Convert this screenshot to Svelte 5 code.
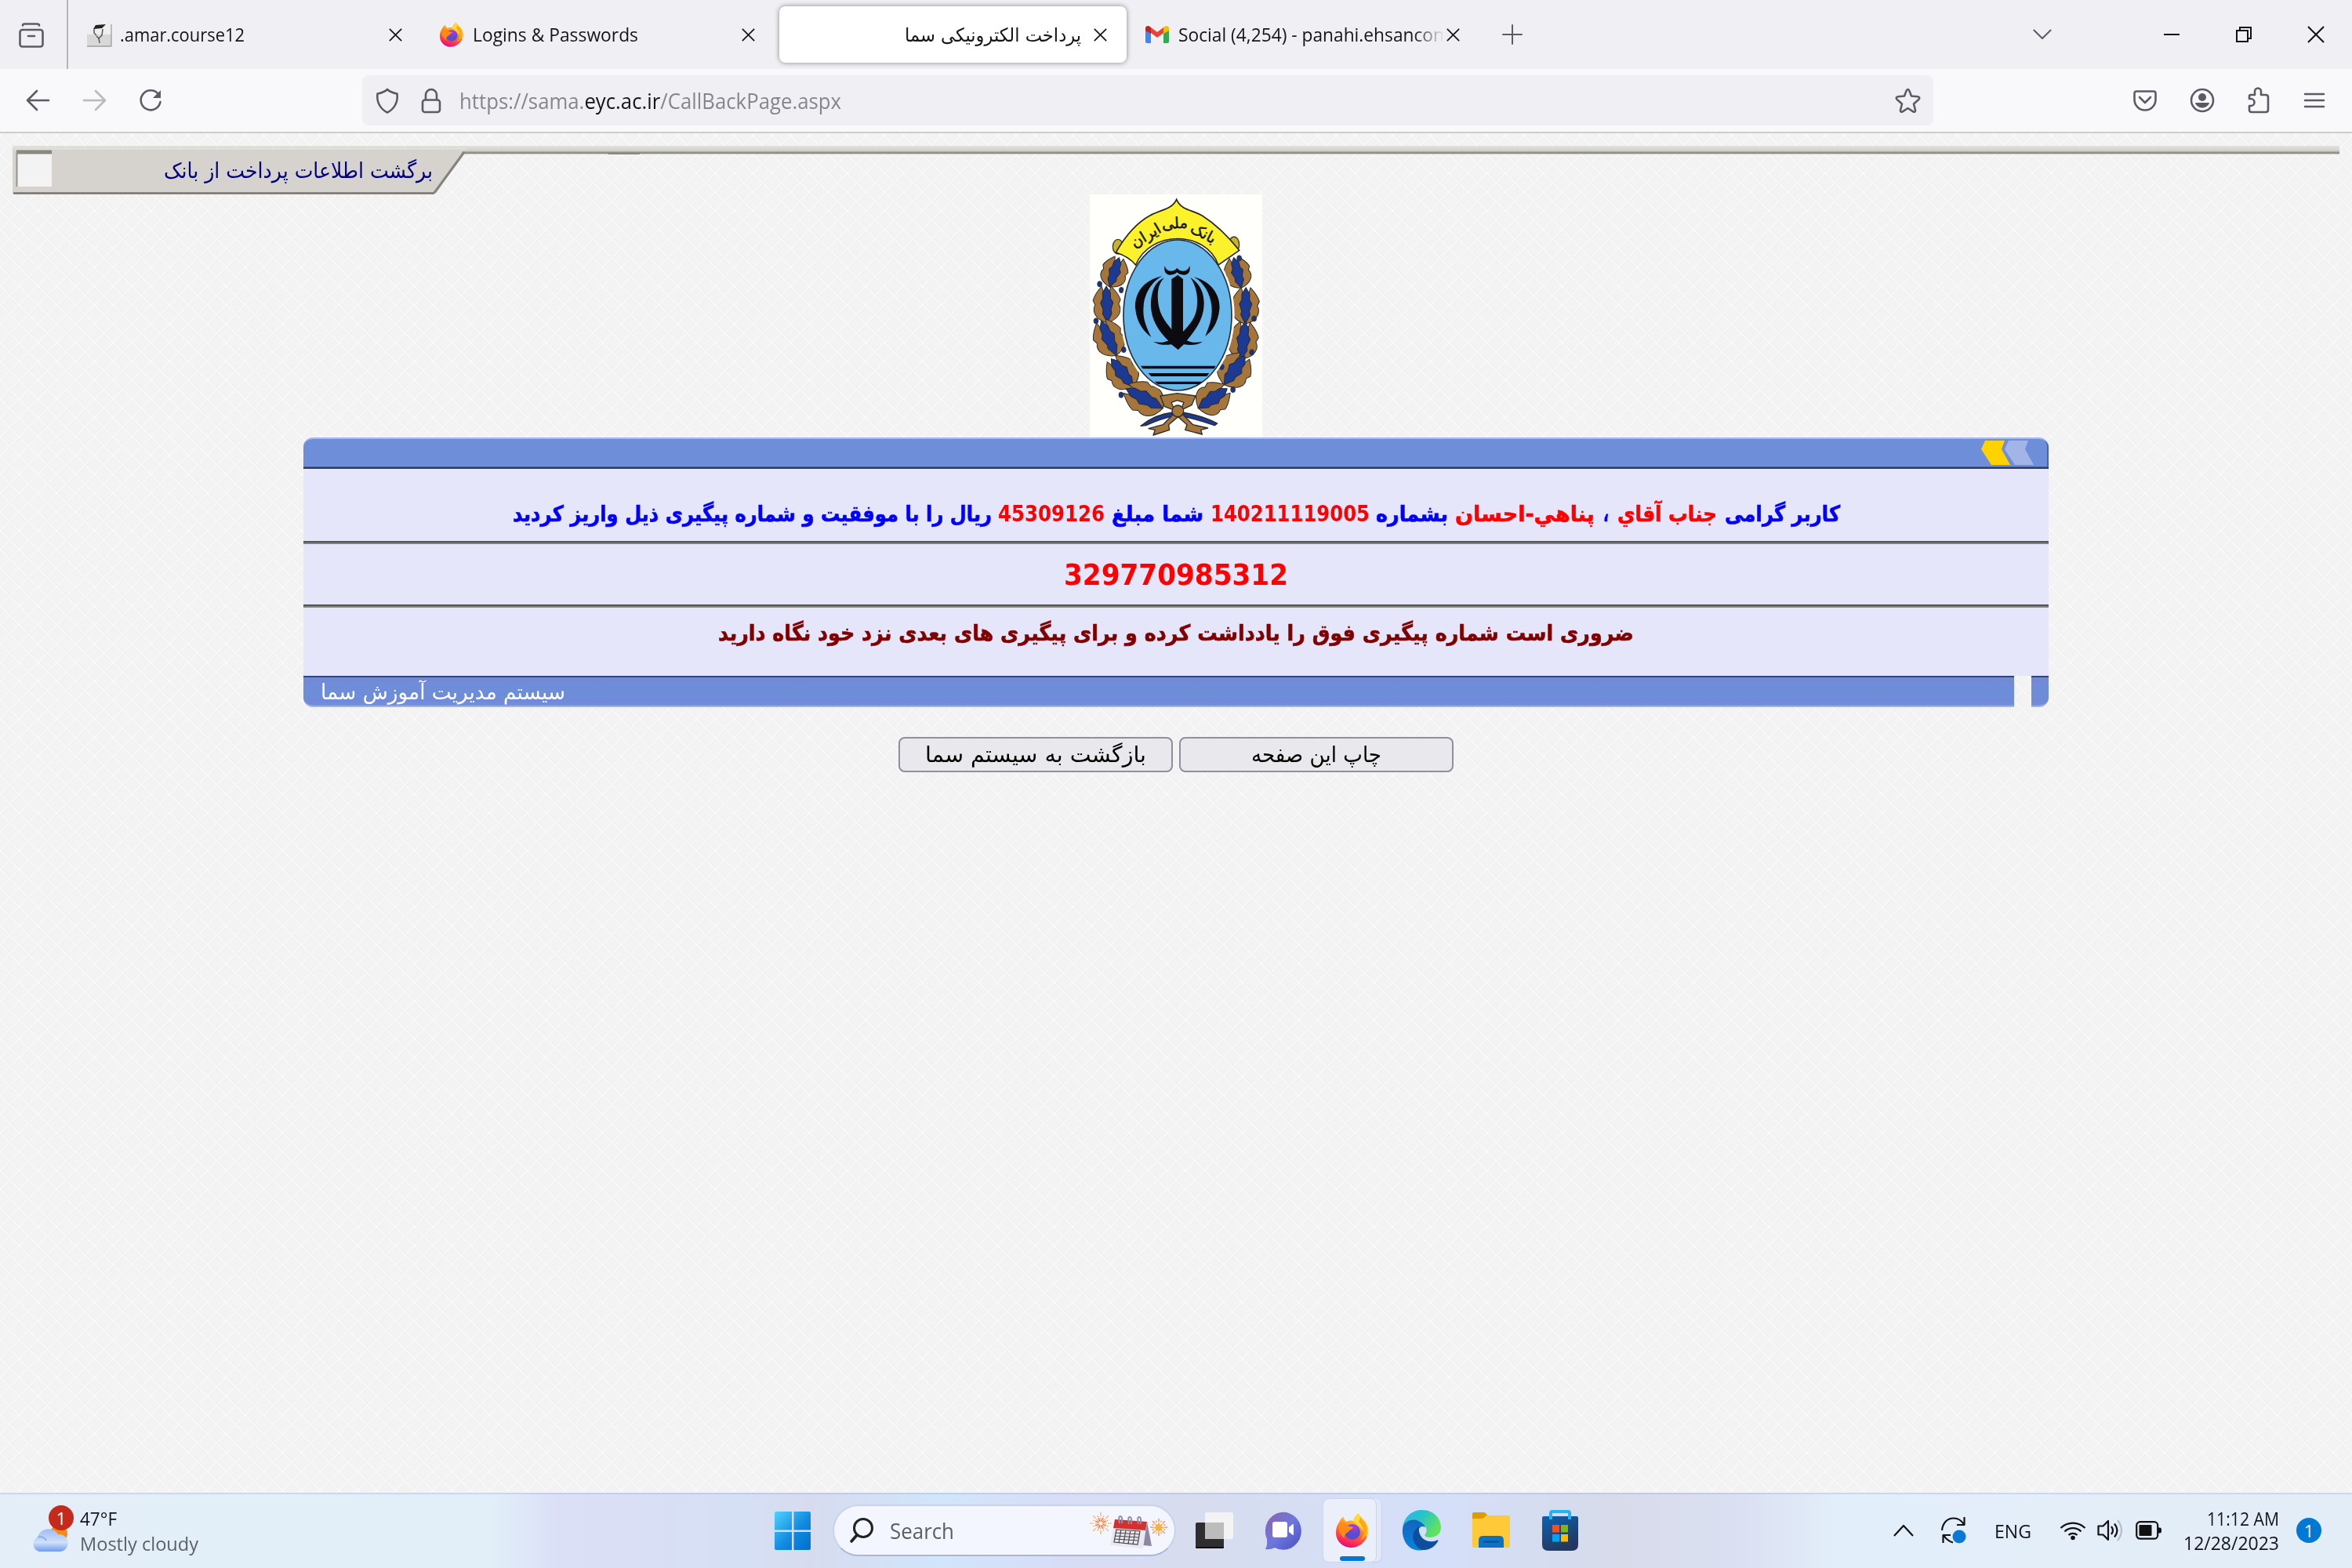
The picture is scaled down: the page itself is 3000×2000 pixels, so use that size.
<script>
  // Scales a single line of text horizontally to the width its slot reserves.
  function fit(node, width) {
    const natural = node.getBoundingClientRect().width;
    if (natural > 0) node.style.transform = `scaleX(${width / natural})`;
  }

  const message = [
    { text: 'کاربر گرامی', w: 147, gap: 0 },
    { text: 'جناب آقاي', w: 127, gap: 10, red: true },
    { text: '،', w: 7, gap: 11 },
    { text: 'پناهي-احسان', w: 178, gap: 11, red: true },
    { text: 'بشماره', w: 92, gap: 9 },
    { text: '140211119005', w: 203, gap: 8, red: true, ltr: true },
    { text: 'شما مبلغ', w: 117, gap: 9 },
    { text: '45309126', w: 136, gap: 9, red: true, ltr: true },
    { text: 'ریال را با موفقیت و شماره پیگیری ذیل واریز کردید', w: 611, gap: 8 }
  ];

  // Laurel sprigs: base point, rotation, length and half-width.
  const sprigs = [
    [136, 408, 18, 118, 48], [128, 545, -2, 140, 50], [162, 670, -24, 144, 54],
    [226, 790, -38, 136, 56], [340, 872, -62, 160, 58],
    [640, 412, -14, 120, 48], [655, 550, 1, 140, 50], [640, 685, 6, 144, 54],
    [574, 782, 36, 136, 60], [475, 872, 56, 134, 58]
  ];
  const berries = [[98, 397], [84, 538], [181, 420], [190, 648], [180, 821], [632, 298], [689, 529], [680, 658], [565, 714], [608, 801]];
  const rays = Array.from({ length: 16 }, (_, i) => i * 22.5);
</script>

{#snippet line(text, w, rtl)}
  <span class="slot" style:width="{w}px"><span class="fit" dir={rtl ? 'rtl' : 'ltr'} use:fit={w}>{text}</span></span>
{/snippet}

{#snippet cross()}
  <svg class="close" viewBox="0 0 16 16"><path d="M.8.8l14.4 14.4M15.2.8L.8 15.2" /></svg>
{/snippet}

{#snippet firefox()}
  <path fill="url(#ffBody)" d="M4 12C5 9 7 6 10 5c0 3 1 4 3 6 2-1 6-2 9-1 1-4 3-7 7-10 0 4 5 6 8 10 6 8 5 18 0 25-5 6-11 9-17 9C8 44 0 35 0 25 0 20 1 16 4 12z" />
  <path fill="#ffd93b" d="M29 0c0 4 5 6 8 10 5 7 5 15 2 21-1-8-5-8-8-13-2-2-7-5-9-8 1-4 3-7 7-10z" />
  <path fill="#ffa51e" d="M29 11c7 7 8 17 2 24 9-4 12-16 5-24-2-2-4-4-5-7 0 3-1 5-2 7z" />
  <circle cx="21" cy="24" r="10" fill="url(#ffGlobe)" />
  <path fill="#ff8a16" d="M3 13c4-2 7 0 10 3 3 1 5 0 9 2-1 3-5 3-6 6-3 1-6 4-5 8-5-3-9-10-8-19z" />
{/snippet}

<svg class="defs" aria-hidden="true">
  <defs>
    <linearGradient id="ffBody" x1=".7" y1="0" x2=".35" y2="1"><stop offset=".15" stop-color="#ffd02e" /><stop offset=".5" stop-color="#ff7a1f" /><stop offset=".78" stop-color="#ff3750" /><stop offset="1" stop-color="#e00878" /></linearGradient>
    <radialGradient id="ffGlobe" cx=".6" cy=".2"><stop offset="0" stop-color="#b833e1" /><stop offset=".9" stop-color="#5a4bd0" /></radialGradient>
    <linearGradient id="winTile" x1="0" y1="0" x2="1" y2="1"><stop offset="0" stop-color="#4fd2ff" /><stop offset=".55" stop-color="#118ae0" /><stop offset="1" stop-color="#0070cf" /></linearGradient>
  </defs>
</svg>

<div class="screen">
  <header class="tabs">
    <div class="view">
      <svg width="34" height="32" viewBox="0 0 34 32" class="ico"><path d="M6 3.500C6 2 7 1.500 8.500 1.500H24c2 0 3 .5 3 2" /><rect x="2.500" y="9" width="29" height="21.500" rx="3" /><path d="M13 17h8" /></svg>
    </div>
    <div class="tab first">
      <svg width="31" height="32" viewBox="0 0 31 32"><rect width="31" height="32" rx="2" fill="#d8d8d8" /><rect width="31" height="16" rx="2" fill="#efefef" /><path d="M11 4l13-1-5 5-11 1z" fill="#222" /><path d="M9 9v5l3 3M20 9l-1 8-4 4 1 6M12 18l3 3" fill="none" stroke="#555" stroke-width="1.500" /><path d="M0 31h31V3" fill="none" stroke="#888" /></svg>
      {@render line('.amar.course12', 159)}
      {@render cross()}
    </div>
    <div class="tab second">
      <svg width="31" height="32" viewBox="0 0 43 44">{@render firefox()}</svg>
      {@render line('Logins & Passwords', 211)}
      {@render cross()}
    </div>
    <div class="tab active">
      {@render line('پرداخت الکترونیکی سما', 225, true)}
      {@render cross()}
    </div>
    <div class="tab gmail">
      <svg width="30" height="22" viewBox="0 0 30 22"><path d="M0 4v16q0 2 2 2h5V9z" fill="#4285f4" /><path d="M30 4v16q0 2-2 2h-5V9z" fill="#34a853" /><path d="M7 9v0l8 6 8-6V2l-8 6-8-6z" fill="#ea4335" /><path d="M0 3q1-5 6-2l1 1v8L0 6z" fill="#c5221f" /><path d="M30 3q-1-5-6-2l-1 1v8l7-4z" fill="#fbbc04" /></svg>
      <span class="faded">{@render line('Social (4,254) - panahi.ehsancon', 339)}</span>
      {@render cross()}
    </div>
    <svg class="ico plus" width="24" height="24" viewBox="0 0 24 24"><path d="M12 0v24M0 12h24" /></svg>
    <svg class="ico chev" width="24" height="14" viewBox="0 0 26 15"><path d="M1.500 1.500L13 13 24.500 1.500" /></svg>
    <svg class="win min" width="20" height="2" viewBox="0 0 20 2"><path d="M0 1h20" /></svg>
    <svg class="win max" width="20" height="20" viewBox="0 0 20 20"><path d="M1 5h14v14H1zM5 5V1h14v14h-4" /></svg>
    <svg class="win" width="22" height="22" viewBox="0 0 22 22"><path d="M1 1l20 20M21 1L1 21" /></svg>
  </header>

  <nav class="toolbar">
    <svg class="ico" width="30" height="26" viewBox="0 0 30 26"><path d="M29 13H2M14 1L2 13l12 12" /></svg>
    <svg class="ico dim" width="30" height="26" viewBox="0 0 30 26"><path d="M1 13h27M16 1l12 12-12 12" /></svg>
    <svg class="ico reload" width="30" height="30" viewBox="0 0 30 30"><path d="M25 6A12.500 12.500 0 1 0 27.500 16" /><path d="M28 1v10H18z" fill="#5b5b66" stroke="none" /></svg>
    <div class="urlbar">
      <svg class="ico" width="30" height="33" viewBox="0 0 30 33"><path d="M15 2c3 3 7 4.500 12.500 5.500C29 18 24 27 15 31.500 6 27 1 18 2.500 7.500 8 6.500 12 5 15 2z" /></svg>
      <svg class="ico lock" width="26" height="33" viewBox="0 0 26 33"><rect x="2" y="15.500" width="22" height="15.500" rx="3" /><path d="M6 15V9a7 7 0 0 1 14 0v6" /></svg>
      <span class="url"><span class="slot url-slot"><span class="fit" use:fit={487}>https://sama.<b>eyc.ac.ir</b>/CallBackPage.aspx</span></span></span>
      <svg class="ico star" width="33" height="32" viewBox="0 0 33 32"><path d="M16.500 2c1.500 0 2 2 4.500 8.500l8 .8c2.500.3 3 2 1.200 3.700L24 20.500l2 8c.3 1.800-1 2.800-2.700 1.800L16.500 26l-6.800 4.300C8 31.300 6.700 30.300 7 28.500l2-8L2.800 15C1 13.300 1.500 11.600 4 11.300l8-.8C14.500 4 15 2 16.500 2z" /></svg>
    </div>
    <svg class="ico pocket" width="30" height="27" viewBox="0 0 30 27"><path d="M4 1.500h22q2.500 0 2.500 2.500v8a13.500 13.500 0 0 1-27 0V4q0-2.500 2.500-2.500zM8 9l7 7 7-7" /></svg>
    <svg class="ico account" width="32" height="32" viewBox="0 0 32 32"><circle cx="16" cy="16" r="14" /><circle cx="16" cy="12" r="5" fill="#5b5b66" stroke="none" /><path d="M7 19h18c-1 4-5 6.500-9 6.500S8 23 7 19z" fill="#5b5b66" stroke="none" /></svg>
    <svg class="ico puzzle" width="28" height="34" viewBox="0 0 28 34"><path d="M4 10h5V5.500a4 4 0 0 1 8 0V10h6q3 0 3 3v16q0 3-3 3H5q-3 0-3-3v-5h2a4.500 4.500 0 0 0 0-9H2v-3q0-2 2-2z" /></svg>
    <svg class="ico menu" width="24" height="20" viewBox="0 0 24 20"><path d="M0 2h24M0 10h24M0 18h24" /></svg>
  </nav>

  <main class="page">
    <div class="heading">
      <svg class="ribbon" width="2968" height="62" viewBox="0 0 2968 62">
        <defs><linearGradient id="bar" x1="0" y1="0" x2="0" y2="1"><stop offset="0" stop-color="#e2e2de" /><stop offset=".6" stop-color="#d2d0cb" /><stop offset=".85" stop-color="#85837e" /><stop offset="1" stop-color="#a9a7a2" /></linearGradient></defs>
        <rect width="2968" height="10.500" fill="url(#bar)" />
        <path d="M0 5H576L538 60.500H0z" fill="#d6d3ce" />
        <path d="M0 0h580v5H0z" fill="#dfdfda" />
        <path d="M576 8L538 60" stroke="#85827e" stroke-width="3" />
        <path d="M1 60.500H538" stroke="#77726e" stroke-width="2.500" />
        <rect x="6" y="8" width="44" height="44" fill="#f3f3f3" />
        <path d="M5 8h45" stroke="#8b8884" stroke-width="5" />
        <path d="M5.500 8v44" stroke="#96938f" stroke-width="2" />
        <path d="M760 10h40" stroke="#8b8884" stroke-width="2" />
      </svg>
      <div class="title">{@render line('برگشت اطلاعات پرداخت از بانک', 343, true)}</div>
    </div>

    <svg class="emblem" width="220" height="310" viewBox="60 54 660 930">
      <rect x="60" y="54" width="660" height="930" fill="#fffffb" />
      {#each sprigs as [x, y, a, l, w]}
        <g transform="translate({x} {y}) rotate({a})" stroke="#2b2a2c" stroke-width="3" stroke-linejoin="round">
          <path d="M0 0C{-w} {-l * 0.1} {-w * 1.150} {-l * 0.35} {-w * 0.9} {-l * 0.5}L{-w * 1.05} {-l * 0.62}C{-w * 0.9} {-l * 0.8} {-w * 0.6} {-l * 0.9} {-w * 0.35} {-l}L0 {-l * 0.5}z" fill="#a5763c" />
          <path d="M0 0C{w} {-l * 0.1} {w * 1.150} {-l * 0.35} {w * 0.9} {-l * 0.5}L{w * 1.05} {-l * 0.62}C{w * 0.9} {-l * 0.8} {w * 0.6} {-l * 0.9} {w * 0.35} {-l}L0 {-l * 0.5}z" fill="#a5763c" />
          <path d="M0 0L{-w * 0.35} {-l * 0.25}L{-w * 0.3} {-l * 0.36}L{-w * 0.48} {-l * 0.55}L{-w * 0.3} {-l * 0.66}L{-w * 0.3} {-l * 0.82}L0 {-l}L{w * 0.3} {-l * 0.82}L{w * 0.3} {-l * 0.66}L{w * 0.48} {-l * 0.55}L{w * 0.3} {-l * 0.36}L{w * 0.35} {-l * 0.25}z" fill="#1d3a92" />
        </g>
      {/each}
      {#each berries as [x, y]}
        <ellipse cx={x} cy={y} rx="9" ry="11" fill="#1c3476" stroke="#333" stroke-width="2" />
      {/each}
      <g fill="#c9b32c" stroke="#3a3720" stroke-width="4"><ellipse cx="168" cy="254" rx="20" ry="28" /><ellipse cx="612" cy="246" rx="20" ry="30" /></g>
      <ellipse cx="396" cy="516" rx="218" ry="299" fill="#fffffb" />
      <path d="M392 73C410 115 450 112 490 135 545 170 590 215 632 268L552 324C505 190 290 190 236 324Q210 292 160 276C195 215 235 165 290 135 330 112 375 112 392 73z" fill="#fbf22c" stroke="#26251c" stroke-width="5" />
      <ellipse cx="396" cy="516" rx="207" ry="288" fill="#68b8ec" stroke="#203040" stroke-width="5" />
      <g class="script" fill="#17150c" stroke="#17150c" stroke-width="1.500" text-anchor="middle">
        <text transform="translate(284 228) rotate(-31)" font-size="58">ایران</text>
        <text transform="translate(386 184) rotate(-3)" font-size="58">ملی</text>
        <text transform="translate(486 220) rotate(28)" font-size="58">بانک</text>
      </g>
      <g fill="#0c0b10">
        <path d="M347 327q5 20 23 20 16 0 24-12 8 12 24 12 18 0 24-20 6 34-22 35-16 0-26-10-10 10-26 10-27-1-21-35z" />
        <path d="M373 378L397 362 417 378V588L430 610 398 648 367 610 373 588z" />
        <path d="M345 374C315 400 318 450 325 485 335 535 370 560 390 595L367 620C320 575 295 530 294 480 294 425 310 385 345 374z" />
        <path d="M445 372C497 405 502 460 494 502 485 550 450 590 424 622L400 598C440 555 465 530 470 485 475 440 465 400 445 372z" />
        <path d="M338 366C260 382 228 440 235 495 240 545 268 580 295 600 270 550 262 520 266 480 270 430 300 385 338 366z" />
        <path d="M458 370C525 385 562 440 556 495 550 545 530 575 502 597 520 550 530 525 526 480 520 430 495 390 458 370z" />
        <path d="M303 617Q340 627 372 608H424Q450 627 492 617 470 635 420 628L398 648 372 628Q330 634 303 617z" />
        <path d="M255 710H542L536 721H263zM283 738H517L508 750H295zM308 770H490L480 780H320z" />
      </g>
      <g fill="#a5763c" stroke="#2b2a2c" stroke-width="4" stroke-linejoin="round">
        <path d="M378 888Q310 895 255 940L275 938Q330 912 388 900zM415 888Q490 900 548 930L538 938Q470 915 405 900z" fill="#1d3a92" />
        <path d="M330 825L395 815 465 825 450 860 408 880 420 850 395 842 372 850 385 880 345 865z" />
        <path d="M380 895L340 935 285 950 310 955 303 975 365 955 362 935 398 905 432 935 425 955 490 972 485 955 512 948 455 935 415 895z" />
        <circle cx="397" cy="883" r="22" />
      </g>
    </svg>

    <section class="panel">
      <div class="cap">
        <svg width="68" height="31" viewBox="0 0 68 31"><path d="M5 0H30L26 11 37 31H13L0 11z" fill="#ffd200" /><path d="M35 0H60L56 11 67 31H43L30 11z" fill="#a3b4e6" /></svg>
      </div>
      <div class="row message" dir="rtl">
        {#each message as m}
          <span class:red={m.red} style:margin-right="{m.gap}px">{@render line(m.text, m.w, !m.ltr)}</span>
        {/each}
      </div>
      <div class="row tracking">{@render line('329770985312', 286)}</div>
      <div class="row note">{@render line('ضروری است شماره پیگیری فوق را یادداشت کرده و برای پیگیری های بعدی نزد خود نگاه دارید', 1168, true)}</div>
      <div class="foot">
        <div class="foot-main">{@render line('سیستم مدیریت آموزش سما', 312, true)}</div>
        <div class="foot-end"></div>
      </div>
    </section>

    <div class="actions">
      <button>{@render line('بازگشت به سیستم سما', 282, true)}</button>
      <button>{@render line('چاپ این صفحه', 166, true)}</button>
    </div>
  </main>

  <footer class="taskbar">
    <div class="weather">
      <div class="cloud">
        <svg width="54" height="58" viewBox="0 0 54 58">
          <defs><linearGradient id="cl" x1="0" y1="0" x2="0" y2="1"><stop offset="0" stop-color="#9dbdf5" /><stop offset=".6" stop-color="#cfe0f8" /><stop offset="1" stop-color="#6d9df0" /></linearGradient></defs>
          <circle cx="36" cy="34" r="11" fill="#f58a1b" />
          <path d="M11 57A10 10 0 0 1 9 38.500 14.500 14.500 0 0 1 35 35 11 11 0 1 1 38 57z" fill="url(#cl)" />
          <path d="M9 38.500Q17 37 20 43" fill="none" stroke="#8db0ee" stroke-width="2" />
        </svg>
        <span class="badge red-badge">1</span>
      </div>
      <div class="forecast">
        <div>{@render line('47°F', 47)}</div>
        <div class="grey">{@render line('Mostly cloudy', 151)}</div>
      </div>
    </div>

    <svg class="start" width="46" height="49" viewBox="0 0 46 49"><path d="M2 0H22V23.500H0V2Q0 0 2 0zM24.500 0H44q2 0 2 2V23.500H24.500zM0 26H22V49H2q-2 0-2-2zM24.500 26H46V47q0 2-2 2H24.500z" fill="url(#winTile)" /></svg>

    <div class="search">
      <svg width="30" height="33" viewBox="0 0 30 33"><circle cx="17" cy="13" r="11.500" fill="none" stroke="#222" stroke-width="3" /><path d="M9 22L2 30" stroke="#222" stroke-width="3.500" stroke-linecap="round" /></svg>
      <span class="search-text">{@render line('Search', 82)}</span>
      <svg class="festive" width="98" height="46" viewBox="0 0 98 46">
        {#each rays as r, i}
          <path d="M0 -2.500V-{i % 2 ? 10 : 14}" transform="translate(13 14) rotate({r})" stroke={i % 2 ? '#f0664a' : '#f5b04a'} stroke-width="1.200" stroke-dasharray="5 1.500" />
          <path d="M0 -7V-{i % 2 ? 9 : 11}" transform="translate(87 19) rotate({r})" stroke="#f0804a" stroke-width="1.200" />
        {/each}
        <path d="M87 12l1.500 4 4-2-2 4 4 1.500-4 1.500 2 4-4-2L87 27l-1.500-4-4 2 2-4-4-1.500 4-1.500-2-4 4 2z" fill="#f7b23b" />
        <path d="M72 12L78 43 66 42z" fill="#8c87a3" />
        <path d="M31 9L72 12 67 46 25 42z" fill="#ebe7f2" />
        <path d="M31 9L72 12 70 23 29 20z" fill="#d3302f" />
        <path d="M33 22L63 24 60 41 30 38zM32 26l30 2M31 30l30 2M31 34l30 2M39 22l-3 17M45 23l-3 17M51 23l-3 17M57 24l-3 17" fill="none" stroke="#444" stroke-width="1.200" />
        <path d="M37 14q-2-9 1-9t2 9M49 15q-2-9 1-9t2 9M61 15q-2-9 1-9t2 9" fill="none" stroke="#928dab" stroke-width="2" />
      </svg>
    </div>

    <svg class="taskview" width="48" height="48" viewBox="0 0 48 48"><rect y="14" width="36" height="33" rx="2" fill="#2e2e2e" /><path d="M0 45h36v1q0 1-2 1H2q-2 0-2-1z" fill="#0b0b0b" /><rect x="12" y="1" width="36" height="34" rx="2" fill="#f3f3f3" /><path d="M12 14h24v21H12z" fill="#bcbcbc" /></svg>

    <svg class="chat" width="47" height="50" viewBox="0 0 47 50">
      <defs><linearGradient id="ch" x1="0" y1="0" x2="1" y2="1"><stop offset="0" stop-color="#8e62ad" /><stop offset=".5" stop-color="#6d78dd" /><stop offset="1" stop-color="#4b4ec2" /></linearGradient></defs>
      <path d="M1 49Q4 43 3 36A23 24 0 1 1 13 47Q7 50 1 49z" fill="url(#ch)" /><rect x="10" y="14" width="19" height="20" rx="3" fill="#fff" /><path d="M31 21l5-4q1 0 1 1v12q0 1-1 1l-5-4z" fill="#fff" />
    </svg>

    <div class="running">
      <svg width="43" height="47" viewBox="0 0 43 45">{@render firefox()}</svg>
      <span class="indicator"></span>
    </div>

    <svg class="edge" width="49" height="52" viewBox="0 0 49 52">
      <defs><linearGradient id="eg" x1="0" y1="0" x2="1" y2=".5"><stop offset="0" stop-color="#2fb4f2" /><stop offset=".5" stop-color="#28c3c6" /><stop offset="1" stop-color="#62e35c" /></linearGradient><linearGradient id="eb" x1="0" y1="0" x2="0" y2="1"><stop offset="0" stop-color="#1165bd" /><stop offset="1" stop-color="#0a83de" /></linearGradient></defs>
      <path d="M0 23A24 25 0 0 1 25 0C40 0 49 11 49 22c0 8-6 13-14 13-5 0-8-2-6-4 3-4 2-11-5-14C14 12 2 15 0 23z" fill="url(#eg)" />
      <path d="M0 24C1 15 12 10 20 14c5 2 9 6 9 8-5-3-9 1-9 6 0 12 11 17 21 13-4 8-15 12-24 10C6 49-1 37 0 24z" fill="url(#eb)" />
      <path d="M21 21C8 28 13 47 25 51c9 1 17-5 20-11 1-2 0-2-2-1-10 4-24-2-22-18z" fill="#0d4f9c" />
    </svg>

    <svg class="explorer" width="48" height="46" viewBox="0 0 48 46"><path d="M0 2Q0 0 2 0H14q2 0 3 1l4 5V9H0z" fill="#df9b04" /><path d="M0 8l13 0 5-4H46q2 0 2 2V43q0 2-2 2H2q-2 0-2-2z" fill="#ffc938" /><path d="M8 45V36q0-6 5-6H35q5 0 5 6v9z" fill="#0d72c4" /><path d="M15 37.500h18" stroke="#0b4c8d" stroke-width="2" stroke-linecap="round" /></svg>

    <svg class="store" width="46" height="52" viewBox="0 0 46 52">
      <defs><linearGradient id="st" x1="0" y1="0" x2=".5" y2="1"><stop offset="0" stop-color="#0c62b2" /><stop offset="1" stop-color="#24375e" /></linearGradient></defs>
      <path d="M2 8H44q2 0 2 2V44q0 8-8 8H8q-8 0-8-8V10q0-2 2-2z" fill="url(#st)" /><path d="M11 12V4q0-2 2-2H33q2 0 2 2v8" fill="none" stroke="#22b4f2" stroke-width="4" /><path d="M13 19h9v9.500h-9z" fill="#f25022" /><path d="M24 19h9v9.500h-9z" fill="#7fba00" /><path d="M13 31h9v9.500h-9z" fill="#00a4ef" /><path d="M24 31h9v9.500h-9z" fill="#ffb900" />
    </svg>

    <div class="tray">
      <svg class="sys up" width="26" height="16" viewBox="0 0 26 16"><path d="M1 15L13 2l12 13" /></svg>
      <svg class="sys sync" width="34" height="34" viewBox="0 0 34 34"><path d="M2 17C3 7 9 1.500 17 1.500c6 0 10 3 13 8M30.500 0v10H21M16 32.500C11 31 7 28 4 23M3.500 33V23H13" /><circle cx="24" cy="25" r="8.500" fill="#0a78d7" stroke="none" /></svg>
      <span class="lang">{@render line('ENG', 47)}</span>
      <svg class="sys wifi" width="34" height="26" viewBox="0 0 34 26"><path d="M1.500 10a22 22 0 0 1 31 0M6.500 14.500a15 15 0 0 1 21 0M11.500 19a8 8 0 0 1 11 0" /><circle cx="17" cy="22.500" r="2.800" fill="#111" stroke="none" /></svg>
      <svg class="sys vol" width="34" height="32" viewBox="0 0 34 32"><path d="M1.500 10.500h6L14 4v24l-6.500-6.500h-6zM18 11q4 5 0 10M22 7.500q7 8.500 0 17" /><path d="M26 3q10 13 0 26" stroke="#b4bfcc" /></svg>
      <svg class="sys bat" width="33" height="24" viewBox="0 0 33 24"><rect x="1.200" y="1.200" width="27" height="21.500" rx="4.500" /><rect x="4.500" y="5" width="16" height="14" rx="1" fill="#111" stroke="none" /><path d="M29 8.500h2q2 0 2 2v3q0 2-2 2h-2z" fill="#111" stroke="none" /></svg>
      <div class="clock">
        <div>{@render line('11:12 AM', 92)}</div>
        <div>{@render line('12/28/2023', 122)}</div>
      </div>
      <span class="badge blue-badge">1</span>
    </div>
  </footer>
</div>

<style>
  :global(body) { margin: 0; }
  .screen { width: 3000px; height: 2000px; display: flex; flex-direction: column; overflow: hidden; font-family: "Open Sans", "DejaVu Sans", sans-serif; color: #15141a; }
  svg { display: block; flex: none; overflow: visible; }
  .defs { position: absolute; width: 0; height: 0; }
  .slot { display: block; flex: none; direction: ltr; text-align: left; }
  .fit { display: inline-block; white-space: nowrap; transform-origin: 0 50%; }
  [dir="rtl"] { font-family: "DejaVu Sans", sans-serif; }
  .ico { fill: none; stroke: #5b5b66; stroke-width: 2.600; stroke-linecap: round; stroke-linejoin: round; }

  .tabs { height: 88px; flex: none; background: #f0f0f4; display: flex; align-items: center; font-size: 24px; line-height: 36px; box-sizing: border-box; padding-right: 35px; }
  .view { width: 87px; height: 88px; border-right: 2px solid #b4b4ba; box-sizing: border-box; padding: 29px 0 0 23px; }
  .tab { display: flex; align-items: center; height: 88px; flex: none; box-sizing: border-box; }
  .close { width: 17px; height: 17px; margin-left: auto; fill: none; stroke: #15141a; stroke-width: 1.600; }
  .first { width: 450px; padding: 0 24px 0 24px; gap: 11px; }
  .second { width: 450px; padding: 0 24px 0 24px; gap: 11px; }
  .active { width: 443px; height: 72px; margin-left: 7px; padding: 2px 25px 2px 0; gap: 16px; border-radius: 8px; background: #fff; box-shadow: 0 0 6px rgba(0, 0, 0, .45); justify-content: flex-end; }
  .active .close { margin-left: 0; }
  .gmail { padding-left: 24px; width: 427px; gap: 12px; }
  .gmail .close { margin-left: -9px; }
  .faded { -webkit-mask-image: linear-gradient(90deg, #000 300px, transparent 339px); mask-image: linear-gradient(90deg, #000 300px, transparent 339px); }
  .plus { margin-left: 53px; stroke-width: 2; }
  .chev { margin-left: auto; stroke-width: 2.200; }
  .win { fill: none; stroke: #111; stroke-width: 2; }
  .min { margin-left: 143px; }
  .max { margin: 0 71px 0 72px; }

  .toolbar { height: 82px; flex: none; box-sizing: border-box; border-bottom: 2px solid #ccc; background: #f9f9fb; display: flex; align-items: center; padding: 0 36px 0 33px; }
  .dim { margin-left: 43px; stroke: #b9b9c0; }
  .reload { margin-left: 41px; margin-top: 2px; }
  .urlbar { width: 2004px; height: 64px; margin-left: 255px; background: #f0f0f4; border-radius: 8px; display: flex; align-items: center; box-sizing: border-box; padding: 0 16px 0 17px; font-size: 28px; line-height: 40px; }
  .lock { margin-left: 28px; }
  .url { margin-left: 23px; color: #85858d; }
  .url b { font-weight: 400; color: #15141a; }
  .url-slot { width: 487px; }
  .star { margin-left: auto; }
  .pocket { margin-left: auto; }
  .account { margin-left: 42px; }
  .puzzle { margin-left: 42px; }
  .menu { margin-left: 45px; }

  .page {
    height: 1734px; flex: none; box-sizing: border-box; padding: 16px 16px 0;
    display: flex; flex-direction: column; align-items: center;
    background-color: #f3f3f3;
    background-image:
      linear-gradient(45deg, transparent 47%, #fafafa 49%, #fafafa 51%, #eeeeee 53%, transparent 56%),
      linear-gradient(135deg, transparent 47%, #fafafa 49%, #fafafa 51%, #eeeeee 53%, transparent 56%);
    background-size: 24px 24px;
    background-position: 1px 3px;
  }
  .heading { width: 2968px; height: 62px; position: relative; flex: none; }
  .ribbon { position: absolute; inset: 0; }
  .title { position: relative; padding: 11px 0 0 193px; font-size: 27px; line-height: 40px; color: #000080; }
  .script { font-family: "DejaVu Sans", sans-serif; }

  .panel { width: 2226px; font-family: "DejaVu Sans", sans-serif; font-size: 28px; line-height: 40px; }
  .cap { height: 40px; box-sizing: border-box; border-top: 2px solid #a6b8ea; border-bottom: 2px solid #2f3a62; border-radius: 12px 12px 0 0; background: #6f8ed9; display: flex; justify-content: flex-end; padding: 2px 18px 0 0; box-shadow: inset -2px -1px 0 #4b63a8; }
  .row { display: flex; justify-content: center; box-sizing: border-box; background: #e5e6fa; font-weight: 700; }
  .row [dir="rtl"] { -webkit-text-stroke: .6px currentColor; }
  .message { height: 96px; padding-top: 38px; color: #0000ff; }
  .message, .tracking { border-bottom: 2px solid #808080; box-shadow: inset 0 -2px 0 #555; }
  .red { color: #ff0000; }
  .tracking { height: 81px; padding-top: 20px; color: #ff0000; font-size: 37px; }
  .note { height: 87px; padding-top: 13px; color: #800000; }
  .foot { display: flex; justify-content: space-between; height: 40px; font-size: 27px; line-height: 38px; color: #fff; }
  .foot-main, .foot-end { box-sizing: border-box; border-top: 2px solid #2f4580; border-bottom: 2px solid #9db4f3; background: linear-gradient(#7489cc, #708cdb 25%, #6d8ed7 55%, #708adb 85%, #7a90d0); }
  .foot-main { width: 2182px; padding-left: 22px; border-bottom-left-radius: 12px; }
  .foot-end { width: 22px; border-bottom-right-radius: 12px; }
  .actions { display: flex; gap: 8px; margin-top: 38px; }
  button { width: 350px; height: 45px; box-sizing: border-box; padding: 1px 0 0; border: 2px solid #8f8f9d; border-radius: 8px; background: #e9e9ed; display: flex; justify-content: center; align-items: center; font: 28px/40px "DejaVu Sans", sans-serif; color: #000; }

  .taskbar {
    height: 96px; flex: none; box-sizing: border-box; border-top: 2px solid rgba(120, 140, 190, .22); padding-bottom: 2px; display: flex; align-items: center;
    background: linear-gradient(90deg, #e3eef8 0, #e2eff9 620px, #dbe0f6 710px, #dadff6 800px, #d5e0f4 950px, #d7dbef 1030px, #d1e5fb 1200px, #d8ddf7 1350px, #d7ddee 1520px, #d4dff9 1830px, #d7dbea 2060px, #dbe0f2 2220px, #e2eef9 2340px, #e3edf8 100%);
  }
  .weather { display: flex; width: 988px; box-sizing: border-box; padding-left: 39px; gap: 9px; }
  .cloud { position: relative; padding-top: 2px; }
  .badge { display: grid; place-items: center; width: 32px; height: 32px; border-radius: 50%; color: #fff; font-size: 22px; line-height: 32px; }
  .red-badge { position: absolute; left: 23px; top: 0; background: #c42b1c; }
  .forecast { font-size: 24px; line-height: 32px; padding-top: 1px; }
  .grey { color: #5c6166; }
  .search { width: 438px; height: 66px; margin-left: 28px; box-sizing: border-box; border: 2px solid #c8d3ea; border-bottom-color: #aab6d3; border-radius: 33px; background: #f3f6fe; display: flex; align-items: center; padding: 0 9px 0 20px; }
  .search-text { margin-left: 21px; font-size: 28px; line-height: 40px; color: #5c5e62; }
  .festive { margin-left: auto; }
  .taskview { margin-left: 25px; }
  .chat { margin-left: 40px; }
  .running { width: 69px; height: 82px; margin-left: 27px; position: relative; background: #ebeffa; border: 1px solid #cdd5ea; border-radius: 8px; box-sizing: border-box; display: flex; justify-content: center; align-items: center; box-shadow: 7px 0 0 -1px #e3e8f8, 8px 1px 0 -1px #c8d0e6; padding-left: 7px; }
  .indicator { position: absolute; left: 21px; bottom: 1px; width: 32px; height: 6px; border-radius: 3px; background: #0078d4; }
  .edge { margin-left: 33px; }
  .explorer { margin-left: 40px; }
  .store { margin-left: 41px; }
  .tray { display: flex; align-items: center; margin-left: auto; padding-right: 39px; font-size: 24px; line-height: 31px; }
  .sys { fill: none; stroke: #111; stroke-width: 2.200; stroke-linejoin: round; }
  .sync { margin-left: 34px; }
  .lang { margin-left: 35px; }
  .wifi { margin-left: 36px; }
  .vol { margin-left: 14px; }
  .bat { margin-left: 15px; }
  .clock { display: flex; flex-direction: column; align-items: flex-end; margin-left: 28px; }
  .blue-badge { margin-left: 22px; background: #0078d4; }
</style>
